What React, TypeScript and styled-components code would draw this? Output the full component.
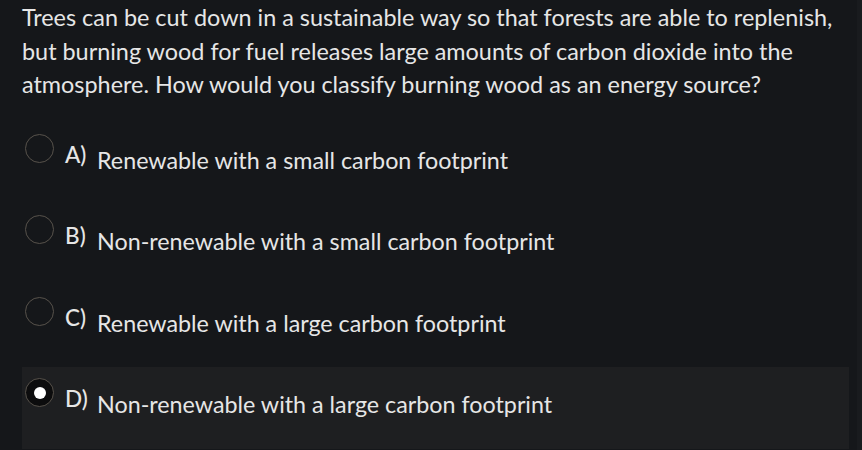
import React, { useState } from "react";
import styled, { createGlobalStyle } from "styled-components";

const GlobalStyle = createGlobalStyle`
  html, body {
    margin: 0;
    padding: 0;
    background-color: #15171a;
  }
  body {
    font-family: Lato, "Noto Sans", sans-serif;
    color: #e6e6e6;
  }
`;

const options = [
  { key: "A", text: "Renewable with a small carbon footprint" },
  { key: "B", text: "Non-renewable with a small carbon footprint" },
  { key: "C", text: "Renewable with a large carbon footprint" },
  { key: "D", text: "Non-renewable with a large carbon footprint" },
];

function App() {
  const [selected, setSelected] = useState("D");

  return (
    <>
      <GlobalStyle />
      <Page>
        <Question>
          Trees can be cut down in a sustainable way so that forests are able
          to replenish, but burning wood for fuel releases large amounts of
          carbon dioxide into the atmosphere. How would you classify burning
          wood as an energy source?
        </Question>
        <OptionList>
          {options.map((o) => (
            <OptionRow
              key={o.key}
              $active={selected === o.key}
              onClick={() => setSelected(o.key)}
            >
              <Radio $checked={selected === o.key} />
              <Letter>{o.key})</Letter>
              <OptionText>{o.text}</OptionText>
            </OptionRow>
          ))}
        </OptionList>
      </Page>
      <ScrollEdge />
    </>
  );
}

export default App;

const Page = styled.div`
  width: 830px;
  padding: 1px 0 0 22px;
  height: 449px;
  overflow: hidden;
`;

const Question = styled.p`
  margin: 0;
  font-size: 23.4px;
  line-height: 33.5px;
  width: 828px;
`;

const OptionList = styled.div`
  display: flex;
  flex-direction: column;
  margin-top: 21px;
`;

const OptionRow = styled.div<{ $active: boolean }>`
  display: flex;
  align-items: flex-start;
  height: 81.5px;
  width: 827px;
  padding-left: 3px;
  box-sizing: border-box;
  background-color: ${(p) => (p.$active ? "#1e1f21" : "transparent")};
  cursor: pointer;
`;

const Radio = styled.span<{ $checked: boolean }>`
  width: 29px;
  height: 29px;
  box-sizing: border-box;
  border-radius: 50%;
  border: 1.5px solid #57524b;
  background-color: ${(p) => (p.$checked ? "#0c0c0d" : "transparent")};
  display: flex;
  align-items: center;
  justify-content: center;
  flex-shrink: 0;
  margin-top: 11px;

  &::after {
    content: "";
    width: 12px;
    height: 12px;
    border-radius: 50%;
    background-color: #ffffff;
    display: ${(p) => (p.$checked ? "block" : "none")};
  }
`;

const Letter = styled.span`
  font-size: 22.5px;
  line-height: 28px;
  font-weight: 500;
  margin-left: 11px;
  margin-top: 18px;
  width: 32px;
  flex-shrink: 0;
`;

const OptionText = styled.span`
  font-size: 23.3px;
  line-height: 28px;
  margin-top: 23px;
`;

const ScrollEdge = styled.div`
  position: fixed;
  top: 0;
  right: 0;
  width: 5px;
  height: 100%;
  background-color: #191b1e;
`;
